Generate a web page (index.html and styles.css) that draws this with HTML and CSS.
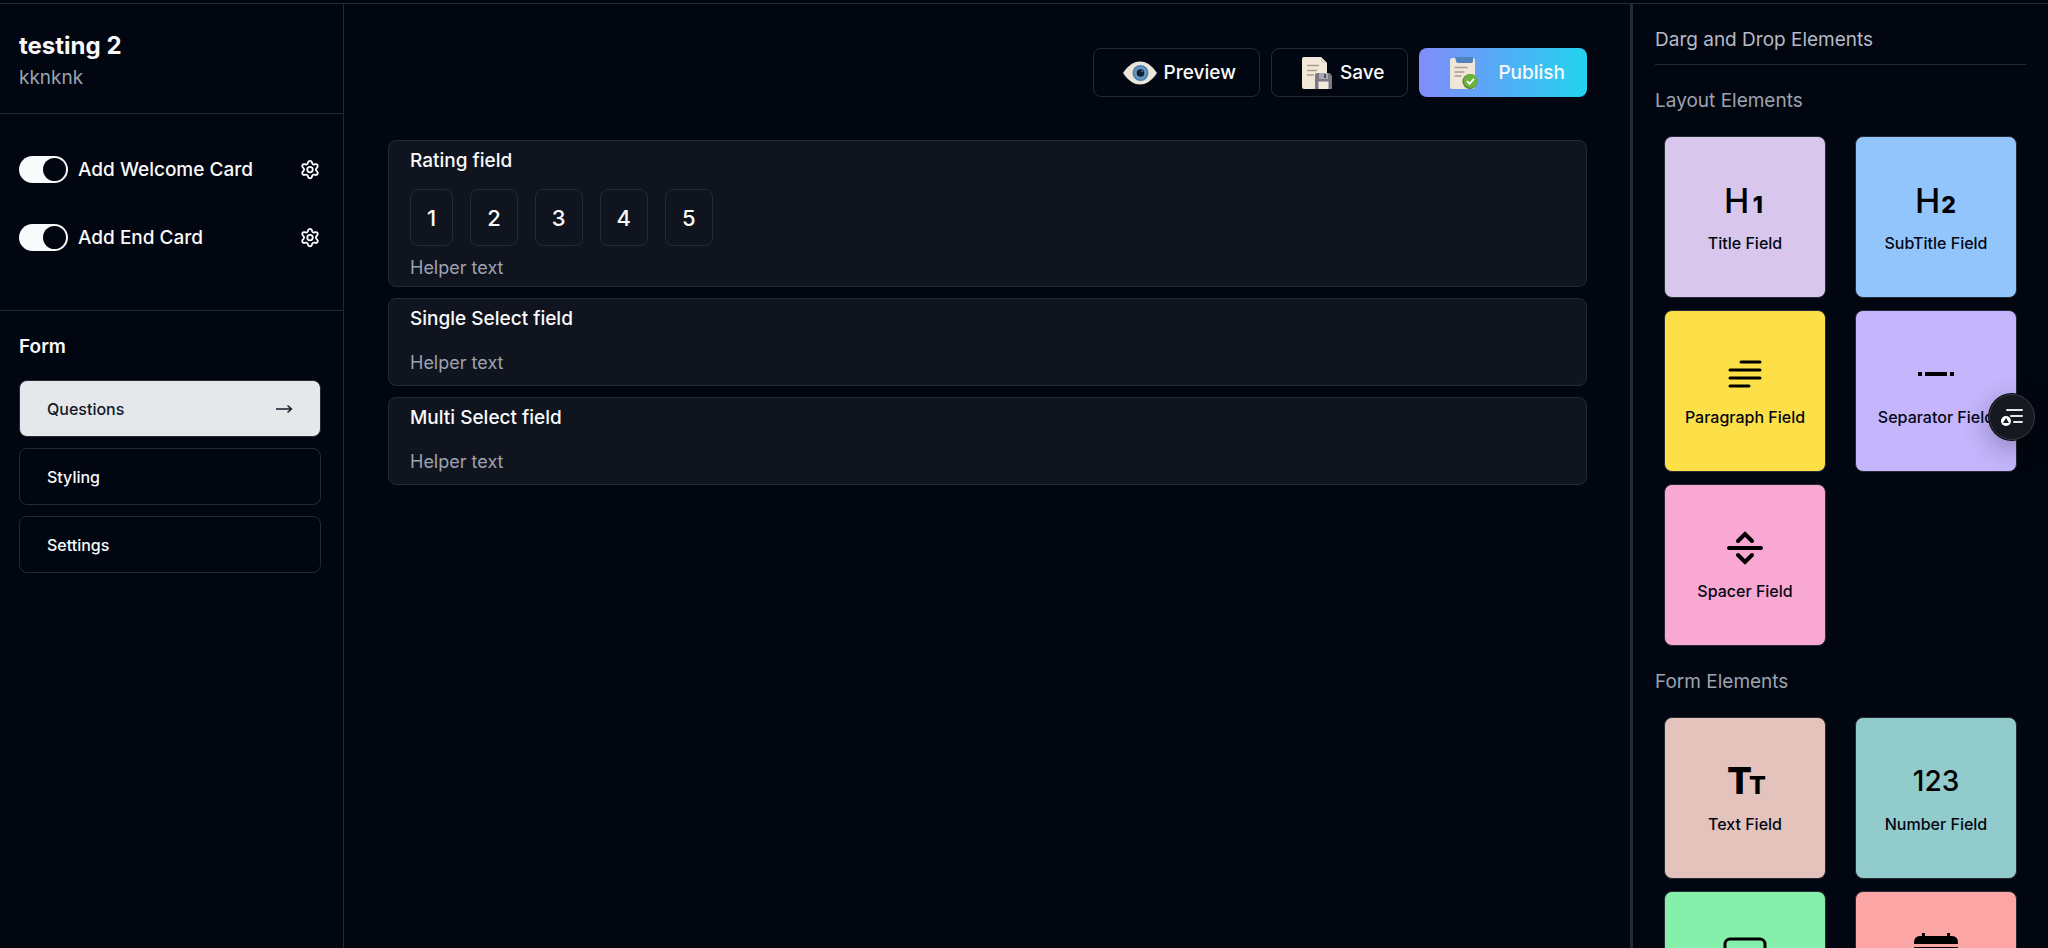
FILE: index.html
```
<!DOCTYPE html>
<html lang="en">
<head>
    <meta charset="UTF-8">
    <meta name="viewport" content="width=device-width, initial-scale=1.0">
    <title>Form Builder</title>
    <link rel="stylesheet" href="styles.css">
</head>
<body>
    <!-- shared icons -->
    <svg width="0" height="0" class="defs">
        <symbol id="gear" viewBox="0 0 24 24">
            <path d="M12 2c1.100 0 1.700.5 2 1.400l.5 1.500c.3.8 1 1.200 1.800 1.100l1.700-.4c.9-.2 1.700.1 2.200 1s.4 1.700-.2 2.400l-1.200 1.400c-.5.7-.5 1.500 0 2.200l1.200 1.400c.6.7.7 1.500.2 2.400s-1.300 1.200-2.200 1l-1.700-.4c-.8-.1-1.500.3-1.800 1.100l-.5 1.500c-.3.9-.9 1.400-2 1.400s-1.700-.5-2-1.400l-.5-1.500c-.3-.8-1-1.200-1.800-1.100l-1.700.4c-.9.2-1.700-.1-2.200-1s-.4-1.700.2-2.400l1.200-1.400c.5-.7.5-1.500 0-2.200L4 9c-.6-.7-.7-1.500-.2-2.400s1.300-1.200 2.200-1l1.700.4c.8.1 1.500-.3 1.800-1.100l.5-1.500c.3-.9.900-1.400 2-1.400z"/>
            <circle cx="12" cy="11.500" r="3"/>
        </symbol>
    </svg>

    <div class="app">
        <aside class="sidebar">
            <div class="form-info">
                <h1>testing 2</h1>
                <p>kknknk</p>
            </div>
            <div class="toggles">
                <div class="toggle-row">
                    <input type="checkbox" class="switch" id="welcomeCard" checked>
                    <label for="welcomeCard">Add Welcome Card</label>
                    <button class="icon-btn" aria-label="Welcome card settings"><svg class="gear"><use href="#gear"/></svg></button>
                </div>
                <div class="toggle-row">
                    <input type="checkbox" class="switch" id="endCard" checked>
                    <label for="endCard">Add End Card</label>
                    <button class="icon-btn" aria-label="End card settings"><svg class="gear"><use href="#gear"/></svg></button>
                </div>
            </div>
            <nav class="form-nav">
                <h2>Form</h2>
                <button class="nav-btn active">Questions
                    <svg width="18" height="10" viewBox="0 0 18 10" fill="none" stroke="currentColor"><path d="M1 5h15M12.500 1.500 16.500 5l-4 3.500" stroke-width="1.400"/></svg>
                </button>
                <button class="nav-btn">Styling</button>
                <button class="nav-btn">Settings</button>
            </nav>
        </aside>

        <main class="builder">
            <div class="actions">
                <button class="btn">
                    <svg width="34" height="24" viewBox="0 0 34 24">
                        <path d="M0 12C6 3.500 11 .5 17 .5S28 3.500 34 12c-6 8.500-11 11.500-17 11.500S6 20.500 0 12z" fill="#ece5da"/>
                        <circle cx="17.500" cy="12" r="8" fill="#4a7fb0"/>
                        <circle cx="17.500" cy="12" r="6.500" fill="#6795c0"/>
                        <circle cx="17.500" cy="12" r="3.800" fill="#0f1f33"/>
                        <circle cx="19" cy="10.500" r=".7" fill="#8fb0cc"/>
                    </svg>
                    Preview
                </button>
                <button class="btn">
                    <svg width="32" height="34" viewBox="0 0 32 34">
                        <path d="M3 1h17l6 6v23a3 3 0 0 1-3 3H3a2 2 0 0 1-2-2V3a2 2 0 0 1 2-2z" fill="#f1e8da"/>
                        <path d="M20 1l6 6h-4a2 2 0 0 1-2-2z" fill="#e0d5c4"/>
                        <path d="M6 9.500h12M6 14.500h10M6 19h7" stroke="#a99d90" stroke-width="1.300"/>
                        <path d="M16 17h12.500l2.500 2.500V33H14V19a2 2 0 0 1 2-2z" fill="#7b7884"/>
                        <path d="M18 17h9v6h-9z" fill="#a9a8b2"/>
                        <path d="M23 18h2v4h-2z" fill="#55535f"/>
                        <path d="M17.500 25.500h10V33h-10z" fill="#f1e8da"/>
                    </svg>
                    Save
                </button>
                <button class="btn publish">
                    <svg width="28" height="34" viewBox="0 0 28 34">
                        <rect x="0" y="2" width="25" height="31" rx="2" fill="#efe6d8"/>
                        <path d="M5 1h18v4a2 2 0 0 1-2 2H8a2 2 0 0 1-2-2z" fill="#4e84bd"/>
                        <path d="M4.500 11.500h13M4.500 16h10M4.500 20h7" stroke="#a99d90" stroke-width="1.300"/>
                        <circle cx="20" cy="25.500" r="7.500" fill="#4d7a28"/>
                        <circle cx="20.500" cy="25" r="7" fill="#6cb33e"/>
                        <path d="M17 25l2.500 2.800 4.500-5" fill="none" stroke="#fff" stroke-width="1.800"/>
                    </svg>
                    Publish
                </button>
            </div>

            <div class="fields">
                <section class="field">
                    <h3>Rating field</h3>
                    <div class="rating">
                        <button>1</button>
                        <button>2</button>
                        <button>3</button>
                        <button>4</button>
                        <button>5</button>
                    </div>
                    <p>Helper text</p>
                </section>
                <section class="field">
                    <h3>Single Select field</h3>
                    <p>Helper text</p>
                </section>
                <section class="field">
                    <h3>Multi Select field</h3>
                    <p>Helper text</p>
                </section>
            </div>
        </main>

        <aside class="elements">
            <h2>Darg and Drop Elements</h2>
            <h3>Layout Elements</h3>
            <div class="element-grid">
                <button class="element title">
                    <svg viewBox="0 0 44 44"><text x="1" y="35" font-size="34" font-weight="500">H</text><text x="40" y="35" font-size="23" font-weight="800" text-anchor="end">1</text></svg>
                    Title Field
                </button>
                <button class="element subtitle">
                    <svg viewBox="0 0 44 44"><text x="1" y="35" font-size="34" font-weight="500">H</text><text x="42" y="35" font-size="23" font-weight="800" text-anchor="end">2</text></svg>
                    SubTitle Field
                </button>
                <button class="element paragraph">
                    <svg viewBox="0 0 44 44"><path d="M18 10h19M7 18h30M7 26h30M7 34h19" stroke-width="3" stroke-linecap="round"/></svg>
                    Paragraph Field
                </button>
                <button class="element separator">
                    <svg viewBox="0 0 44 44"><path d="M4 22h4M11 22h22M36 22h4" stroke-width="4"/></svg>
                    Separator Field
                </button>
                <button class="element spacer">
                    <svg viewBox="0 0 44 44"><path d="M6 22h32M15 15l7-7 7 7M15 29l7 7 7-7" stroke-width="4" stroke-linecap="round"/></svg>
                    Spacer Field
                </button>
            </div>
            <h3>Form Elements</h3>
            <div class="element-grid">
                <button class="element text">
                    <svg viewBox="0 0 44 44"><text x="4" y="35" font-size="37" font-weight="800">T<tspan dx="-3" font-size="25">T</tspan></text></svg>
                    Text Field
                </button>
                <button class="element number">
                    <svg viewBox="0 0 44 44"><text x="22" y="32" font-size="28" font-weight="500" text-anchor="middle">123</text></svg>
                    Number Field
                </button>
                <button class="element textarea">
                    <svg viewBox="0 0 44 44"><rect x="2" y="6" width="40" height="32" rx="5" stroke-width="3"/></svg>
                    TextArea Field
                </button>
                <button class="element date">
                    <svg viewBox="0 0 44 44"><path class="solid" d="M0 10q0-7 6-7h2V0h3v3h22V0h3v3h2q6 0 6 7v1H0zM0 14h44v23q0 6-6 6H6q-6 0-6-6z"/></svg>
                    Date Field
                </button>
            </div>
        </aside>
    </div>

    <button class="floating" aria-label="Page outline">
        <svg width="22" height="18" viewBox="0 0 22 18">
            <path d="M6 2h15M10 8h11M13 14h8" stroke="#e5e7eb" stroke-width="2" stroke-linecap="round"/>
            <circle cx="5" cy="13" r="5" fill="#fff"/>
            <path d="M5 10l3 5H2z" fill="#16181f"/>
        </svg>
    </button>
</body>
</html>
```
FILE: styles.css
```
* { box-sizing: border-box; margin: 0; padding: 0; }
body { background: #020610; color: #f9fafb; height: 100vh; overflow: hidden; font: 500 19px/28px Inter, sans-serif; padding-top: 3px; }
button { font: inherit; color: inherit; background: none; border: none; cursor: pointer; }
.defs { position: absolute; }
.app { display: flex; height: 100%; border-top: 1px solid #252933; }

/* left sidebar */
.sidebar { width: 344px; flex-shrink: 0; border-right: 1px solid #252933; }
.form-info { padding: 25px 19px 20px; border-bottom: 1px solid #252933; }
.form-info h1 { font-size: 24px; line-height: 34px; font-weight: 700; }
.form-info p { font-weight: 400; line-height: 30px; color: #9ca3af; }
.toggles { padding: 42px 22px 59px 19px; display: grid; gap: 41px; border-bottom: 1px solid #252933; }
.toggle-row { display: flex; align-items: center; gap: 10px; line-height: 27px; }
.switch { appearance: none; width: 49px; height: 27px; border-radius: 14px; background: #f9fafb; padding: 2px; display: flex; justify-content: flex-end; cursor: pointer; }
.switch::before { content: ""; width: 23px; height: 23px; border-radius: 50%; background: #020610; }
.icon-btn { margin-left: auto; display: flex; }
.gear { width: 22px; height: 22px; fill: none; stroke: #f9fafb; stroke-width: 2; }
.form-nav { padding: 22px; padding-left: 19px; display: grid; gap: 11px; }
.form-nav h2 { font-size: 19px; font-weight: 600; margin-bottom: 8px; }
.nav-btn { display: flex; align-items: center; justify-content: space-between; height: 57px; padding: 0 27px; font-size: 16px; border: 1px solid #252933; border-radius: 8px; }
.nav-btn.active { background: #e5e7eb; color: #111827; }

/* form canvas */
.builder { flex: 1; padding: 44px 43px 44px 44px; }
.actions { display: flex; justify-content: flex-end; gap: 11px; margin-bottom: 43px; }
.btn { display: flex; align-items: center; gap: 7px; height: 49px; padding: 0 23px 0 29px; border: 1px solid #252933; border-radius: 8px; }
.btn.publish { gap: 20px; padding: 0 22px 0 31px; border: none; background: linear-gradient(to right, #818cf8, #5ca6f8 40%, #22d3ee); }
.fields { display: grid; gap: 11px; }
.field { min-height: 88px; background: #10141f; border: 1px solid #252933; border-radius: 8px; padding: 6px 21px 4px; }
.field h3 { font-size: 19px; font-weight: 500; }
.field p { font-size: 18px; font-weight: 400; color: #9ca3af; margin-top: 16px; }
.rating { display: flex; gap: 17px; margin-top: 14px; }
.rating button { height: 57px; padding: 0 16px; font-size: 22px; border: 1px solid #252933; border-radius: 8px; }
.rating + p { margin-top: 8px; }

/* right sidebar */
.elements { width: 418px; flex-shrink: 0; border-left: 3px solid #252933; padding: 22px 22px 0; overflow: hidden; }
.elements h2 { font-size: 19px; font-weight: 400; color: #b5bac4; padding-bottom: 10px; border-bottom: 1px solid #252933; }
.elements h3 { font-size: 19px; font-weight: 400; color: #9ca3af; margin: 22px 0 21px; }
.element-grid { display: grid; grid-template-columns: 1fr 1fr; gap: 12px 11px; justify-items: center; }
.element { width: 162px; height: 162px; display: flex; flex-direction: column; align-items: center; justify-content: center; gap: 7px; font-size: 16px; color: #030712; border: 1px solid #252933; border-radius: 8px; }
.element svg { width: 44px; height: 44px; fill: none; stroke: #000; overflow: visible; }
.element text, .element .solid { fill: #000; stroke: none; }
.title { background: #d8c6ec; }
.subtitle { background: #93c5fd; }
.paragraph { background: #fde047; }
.separator { background: #c4b5fd; }
.spacer { background: #f9a8d4; }
.text { background: #e4c3bd; }
.number { background: #92cbcc; }
.textarea { background: #86efac; }
.date { background: #fca5a5; }

.floating { position: fixed; right: 13px; top: 394px; width: 46px; height: 46px; border-radius: 50%; display: flex; align-items: center; justify-content: center; background: #16181f; border: 1px solid #3b3d47; box-shadow: 0 0 0 1px #05070d, 0 8px 28px rgba(0, 0, 0, .3); }
```
